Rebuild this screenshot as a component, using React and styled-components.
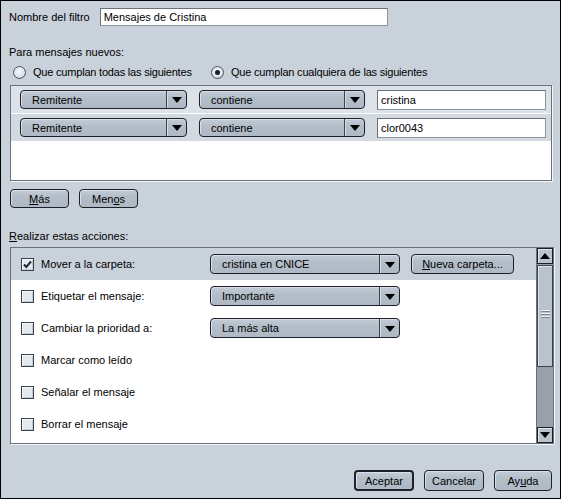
import React from "react";
import styled, { createGlobalStyle } from "styled-components";

const GlobalStyle = createGlobalStyle`
  html, body {
    margin: 0;
    padding: 0;
    background: #c9d1da;
  }
  * {
    box-sizing: border-box;
  }
`;

const Window = styled.div`
  width: 561px;
  height: 499px;
  border: 1px solid #000;
  background: #c9d1da;
  font-family: "Liberation Sans", Arial, sans-serif;
  font-size: 11px;
  color: #000;
  display: flex;
  flex-direction: column;
  padding: 7px 8px 7px 8px;
`;

const NameRow = styled.div`
  display: flex;
  align-items: center;
  height: 18px;
  gap: 10px;
`;

const Label = styled.span`
  white-space: nowrap;
  line-height: 14px;
`;

const TextInput = styled.div`
  width: ${(p) => p.w}px;
  height: ${(p) => p.h || 18}px;
  background: #fff;
  border: 1px solid #6a7179;
  border-right-color: #8d949c;
  border-bottom-color: #8d949c;
  padding-left: 3px;
  display: flex;
  align-items: center;
  line-height: 14px;
`;

const SectionLabel = styled.div`
  line-height: 14px;
  margin-top: ${(p) => p.mt}px;
`;

const RadioRow = styled.div`
  display: flex;
  align-items: center;
  height: 16px;
  margin-top: 5px;
  padding-left: 4px;
`;

const RadioOption = styled.label`
  display: flex;
  align-items: center;
  gap: 7px;
  width: ${(p) => p.w}px;
  letter-spacing: -0.2px;
  white-space: nowrap;
`;

const RadioCircle = styled.span`
  width: 13px;
  height: 13px;
  flex: none;
  border-radius: 50%;
  border: 1px solid #49515b;
  background: radial-gradient(circle at 45% 40%, #f4f7f9 0%, #dfe5eb 55%, #b3bdc8 100%);
  display: flex;
  align-items: center;
  justify-content: center;
  &::after {
    content: "";
    width: 5px;
    height: 5px;
    border-radius: 50%;
    background: ${(p) => (p.checked ? "#1b1f24" : "transparent")};
  }
`;

const ListBox = styled.div`
  margin-top: 5px;
  margin-left: 1px;
  width: ${(p) => p.w}px;
  height: ${(p) => p.h}px;
  background: #fff;
  border: 1px solid #6a7179;
  box-shadow: 1px 1px 0 #f4f6f8;
  display: flex;
`;

const ListContent = styled.div`
  flex: 1;
  display: flex;
  flex-direction: column;
`;

const RuleRow = styled.div`
  display: flex;
  align-items: center;
  gap: 12px;
  height: 27px;
  margin-bottom: 1px;
  padding-left: 9px;
  background: ${(p) => p.bg};
`;

const ComboBox = styled.div`
  width: ${(p) => p.w}px;
  height: ${(p) => p.h || 19}px;
  display: flex;
  border: 1px solid #1d2127;
  border-radius: 4px;
  background: linear-gradient(#c3ccd6, #b3bec9 40%, #aeb9c5);
  box-shadow: inset 1px 1px 0 #d9e0e7;
  overflow: hidden;
`;

const ComboText = styled.span`
  flex: 1;
  display: flex;
  align-items: center;
  padding-left: 11px;
  line-height: 14px;
`;

const ComboArrow = styled.span`
  width: 20px;
  border-left: 1px solid #3d444d;
  box-shadow: inset 1px 0 0 #d4dbe2;
  display: flex;
  align-items: center;
  justify-content: center;
  &::after {
    content: "";
    border-left: 5px solid transparent;
    border-right: 5px solid transparent;
    border-top: 6px solid #000;
    margin-top: 1px;
  }
`;

const ButtonRow = styled.div`
  display: flex;
  gap: ${(p) => p.gap}px;
  margin-top: ${(p) => p.mt}px;
  margin-left: ${(p) => p.ml || 0}px;
  justify-content: ${(p) => p.justify || "flex-start"};
`;

const Button = styled.div`
  width: ${(p) => p.w}px;
  height: ${(p) => p.h || 19}px;
  border: ${(p) => (p.primary ? "2px" : "1px")} solid #1d2127;
  border-radius: 4px;
  background: linear-gradient(#c3ccd6, #b3bec9 40%, #aeb9c5);
  box-shadow: inset 1px 1px 0 #d9e0e7;
  display: flex;
  align-items: center;
  justify-content: center;
  line-height: 14px;
  u {
    text-decoration: underline;
  }
`;

const ActionsBox = styled(ListBox)`
  margin-top: 4px;
`;

const ActionRow = styled.div`
  display: flex;
  align-items: center;
  height: 32px;
  padding-left: 10px;
  background: ${(p) => (p.selected ? "#c9d1da" : "#fff")};
`;

const CheckBox = styled.span`
  width: 13px;
  height: 13px;
  border: 1px solid #3b424b;
  background: #e4eaef;
  box-shadow: inset 1px 1px 0 #f7f9fb, inset -1px -1px 0 #c3ccd5;
  display: flex;
  align-items: center;
  justify-content: center;
  flex: none;
`;

const ActionLabel = styled.span`
  width: 169px;
  margin-left: 7px;
  line-height: 14px;
  white-space: nowrap;
`;

const ActionControls = styled.div`
  display: flex;
  gap: 11px;
`;

const ScrollBar = styled.div`
  width: 17px;
  display: flex;
  flex-direction: column;
  background: #98a1ab;
  border-left: 1px solid #6a7179;
`;

const ScrollButton = styled.div`
  height: 16px;
  background: #b9c3ce;
  border: 1px solid #1d2127;
  box-shadow: inset 1px 1px 0 #dfe5eb;
  display: flex;
  align-items: center;
  justify-content: center;
  &::after {
    content: "";
    border-left: 5px solid transparent;
    border-right: 5px solid transparent;
    ${(p) => (p.up ? "border-bottom: 6px solid #000;" : "border-top: 6px solid #000;")}
  }
`;

const ScrollThumb = styled.div`
  height: 102px;
  margin-top: 1px;
  background: #b9c3ce;
  border: 1px solid #3d444d;
  box-shadow: inset 1px 1px 0 #dfe5eb;
  display: flex;
  flex-direction: column;
  align-items: center;
  justify-content: center;
  gap: 2px;
  padding-bottom: 6px;
  span {
    width: 9px;
    height: 1px;
    background: #eef2f5;
    box-shadow: 0 1px 0 #7f8893;
  }
`;

const ScrollTrack = styled.div`
  flex: 1;
`;

const Spacer = styled.div`
  flex: 1;
`;

const Check = () => (
  <svg width="11" height="11" viewBox="0 0 11 11">
    <path d="M2 5.5 L4.3 8 L9 2.5" fill="none" stroke="#1c2a44" strokeWidth="2" />
  </svg>
);

const actions = [
  { label: "Mover a la carpeta:", checked: true, combo: "cristina en CNICE", button: true },
  { label: "Etiquetar el mensaje:", combo: "Importante" },
  { label: "Cambiar la prioridad a:", combo: "La más alta" },
  { label: "Marcar como leído" },
  { label: "Señalar el mensaje" },
  { label: "Borrar el mensaje" },
];

const rules = [
  { value: "cristina", bg: "#dde2e8" },
  { value: "clor0043", bg: "#d3d9e0" },
];

export default function App() {
  return (
    <>
      <GlobalStyle />
      <Window>
        <NameRow>
          <Label>Nombre del filtro</Label>
          <TextInput w={288}>Mensajes de Cristina</TextInput>
        </NameRow>

        <SectionLabel mt={19}>Para mensajes nuevos:</SectionLabel>
        <RadioRow>
          <RadioOption w={198}>
            <RadioCircle />
            Que cumplan todas las siguientes
          </RadioOption>
          <RadioOption>
            <RadioCircle checked />
            Que cumplan cualquiera de las siguientes
          </RadioOption>
        </RadioRow>

        <ListBox w={542} h={96}>
          <ListContent>
            {rules.map((r, i) => (
              <RuleRow key={i} bg={r.bg}>
                <ComboBox w={167}>
                  <ComboText>Remitente</ComboText>
                  <ComboArrow />
                </ComboBox>
                <ComboBox w={166}>
                  <ComboText>contiene</ComboText>
                  <ComboArrow />
                </ComboBox>
                <TextInput w={169} h={20}>{r.value}</TextInput>
              </RuleRow>
            ))}
          </ListContent>
        </ListBox>

        <ButtonRow gap={10} mt={8} ml={1}>
          <Button w={59}><span><u>M</u>ás</span></Button>
          <Button w={59}><span>Men<u>o</u>s</span></Button>
        </ButtonRow>

        <SectionLabel mt={21}><u>R</u>ealizar estas acciones:</SectionLabel>

        <ActionsBox w={544} h={197}>
          <ListContent>
            {actions.map((a, i) => (
              <ActionRow key={i} selected={i === 0}>
                <CheckBox>{a.checked && <Check />}</CheckBox>
                <ActionLabel>{a.label}</ActionLabel>
                {a.combo && (
                  <ActionControls>
                    <ComboBox w={190} h={20}>
                      <ComboText>{a.combo}</ComboText>
                      <ComboArrow />
                    </ComboBox>
                    {a.button && (
                      <Button w={103} h={20}><span><u>N</u>ueva carpeta...</span></Button>
                    )}
                  </ActionControls>
                )}
              </ActionRow>
            ))}
          </ListContent>
          <ScrollBar>
            <ScrollButton up />
            <ScrollThumb>
              <span />
              <span />
              <span />
            </ScrollThumb>
            <ScrollTrack />
            <ScrollButton />
          </ScrollBar>
        </ActionsBox>

        <Spacer />
        <ButtonRow gap={10} mt={0} justify="flex-end">
          <Button w={60} h={21} primary>Aceptar</Button>
          <Button w={60} h={21}>Cancelar</Button>
          <Button w={58} h={21}><span>Ay<u>u</u>da</span></Button>
        </ButtonRow>
      </Window>
    </>
  );
}
